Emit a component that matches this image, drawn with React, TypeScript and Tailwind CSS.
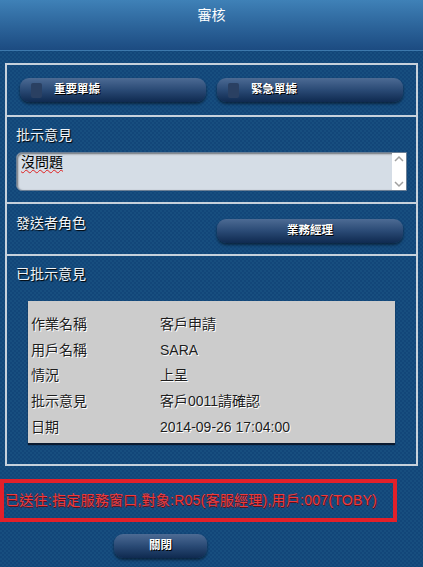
const FONT = "font-['Liberation_Sans','Noto_Sans_CJK_TC',sans-serif]";

function DarkButton({ label, icon, className = "" }: { label: string; icon?: boolean; className?: string }) {
  return (
    <div
      className={`flex h-[24px] items-center rounded-[9px] bg-gradient-to-b from-[#4d6b94] via-[#2a4a75] to-[#0f2a50] shadow-[0_2px_3px_rgba(0,0,0,0.5)] ${className}`}
    >
      {icon ? (
        <>
          <span className="ml-[11px] h-[15px] w-[11px] rounded-[2px] bg-[#2a4062]" />
          <span className="ml-[12px] text-[11.5px] font-bold text-white [text-shadow:1px_1px_0_#000]">{label}</span>
        </>
      ) : (
        <span className="w-full text-center text-[11.5px] font-bold text-white [text-shadow:1px_1px_0_#000]">{label}</span>
      )}
    </div>
  );
}

function Label({ children }: { children: string }) {
  return <div className="text-[14px] leading-[17px] text-[#f0f4f8] [text-shadow:1px_1px_1px_#000]">{children}</div>;
}

const rows = [
  ["作業名稱", "客戶申請"],
  ["用戶名稱", "SARA"],
  ["情況", "上呈"],
  ["批示意見", "客戶0011請確認"],
  ["日期", "2014-09-26 17:04:00"],
];

export default function App() {
  return (
    <div
      className={`${FONT} h-[567px] w-[423px] overflow-hidden bg-[#144a7b] bg-[repeating-conic-gradient(#174e7f_0_25%,#124679_0_50%)] bg-[length:4px_4px]`}
    >
      <header className="flex h-[51px] justify-center border-b border-[#3d79ad] bg-gradient-to-b from-[#3f81b7] to-[#1c4b81] pt-[6px]">
        <span className="text-[14px] leading-[18px] text-white">審核</span>
      </header>

      <div className="mx-[5px] mt-[12px] border-2 border-[#c6d1dc]">
        <section className="flex gap-[11px] px-[13px] pb-[13px] pt-[13px]">
          <DarkButton label="重要單據" icon className="flex-1" />
          <DarkButton label="緊急單據" icon className="flex-1" />
        </section>

        <section className="border-t-2 border-[#c6d1dc] px-[9px] pb-[11px] pt-[10px]">
          <Label>批示意見</Label>
          <div className="mt-[8px] flex h-[39px] rounded-l-[6px] border border-[#6b7f95] bg-[#d5dde6] shadow-[inset_1px_1px_2px_rgba(0,0,0,0.5)]">
            <span className="ml-[4px] mt-[1px] flex-1 text-[14px] leading-[17px] text-black underline decoration-[#e02020] decoration-wavy decoration-1 underline-offset-2">
              沒問題
            </span>
            <div className="flex w-[14px] flex-col items-center justify-between bg-white py-[2px] text-[#a0a0a0]">
              <svg width="10" height="8" viewBox="0 0 10 8" fill="none" stroke="currentColor" strokeWidth="1.5">
                <path d="M1 6 L5 2 L9 6" />
              </svg>
              <svg width="10" height="8" viewBox="0 0 10 8" fill="none" stroke="currentColor" strokeWidth="1.5">
                <path d="M1 2 L5 6 L9 2" />
              </svg>
            </div>
          </div>
        </section>

        <section className="flex border-t-2 border-[#c6d1dc] pb-[11px] pl-[9px] pr-[13px] pt-[11px]">
          <div className="flex-1">
            <Label>發送者角色</Label>
          </div>
          <DarkButton label="業務經理" className="mt-[4px] w-[186px]" />
        </section>

        <section className="border-t-2 border-[#c6d1dc] px-[9px] pb-[21px] pt-[10px]">
          <Label>已批示意見</Label>
          <div className="mx-[12px] mt-[18px] bg-[#cccccc] pb-[3px] pt-[11px] shadow-[0_2px_1px_#0a1a30]">
            {rows.map(([k, v]) => (
              <div key={k} className="flex h-[25.6px] items-center text-[14px] text-[#1d1d1d] [text-shadow:1px_1px_0_#fff]">
                <span className="w-[132px] pl-[3px]">{k}</span>
                <span>{v}</span>
              </div>
            ))}
          </div>
        </section>
      </div>

      <div className="mt-[13px] flex h-[43px] w-[397px] items-center border-4 border-[#e3202a] pl-[1px]">
        <span className="whitespace-nowrap text-[14px] leading-[18px] tracking-[0.25px] text-[#ee3b3b] [text-shadow:1px_1px_0_#5a1020]">
          已送往:指定服務窗口,對象:R05(客服經理),用戶:007(TOBY)
        </span>
      </div>

      <div className="ml-[114px] mt-[12px] w-[93px]">
        <DarkButton label="關閉" />
      </div>
    </div>
  );
}
